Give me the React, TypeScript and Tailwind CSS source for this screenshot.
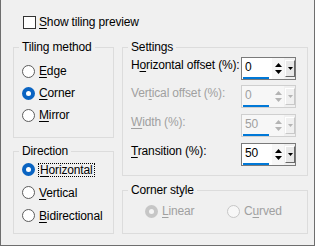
import type { ReactNode } from 'react';

const Acc = ({ c }: { c: string }) => (
  <span className="underline decoration-1 underline-offset-[2px]">{c}</span>
);

const Radio = ({ checked, disabled }: { checked?: boolean; disabled?: boolean }) => {
  if (checked && disabled) {
    return (
      <span className="w-[13px] h-[13px] shrink-0 rounded-full bg-[#c6c6c6] flex items-center justify-center">
        <span className="w-[5px] h-[5px] rounded-full bg-[#f4f4f4]" />
      </span>
    );
  }
  if (checked) {
    return (
      <span className="w-[13px] h-[13px] shrink-0 rounded-full bg-[#0a64c2] flex items-center justify-center">
        <span className="w-[5px] h-[5px] rounded-full bg-white" />
      </span>
    );
  }
  return (
    <span
      className={
        'w-[13px] h-[13px] shrink-0 rounded-full border ' +
        (disabled ? 'border-[#c6c6c6] bg-[#f7f7f7]' : 'border-[#5c5c5c] bg-white')
      }
    />
  );
};

const Group = ({ title, className, children }: { title: string; className: string; children: ReactNode }) => (
  <fieldset className={'border border-[#dcdcdc] box-border ' + className}>
    <legend className="ml-[5px] px-[3px] leading-[14px]">{title}</legend>
    {children}
  </fieldset>
);

const Spin = ({ value, disabled }: { value: string; disabled?: boolean }) => {
  const arrow = disabled ? '#b4b4b4' : '#000000';
  return (
    <div
      className={
        'flex shrink-0 w-[55px] h-[23px] border box-border ' +
        (disabled ? 'border-[#cfcfcf]' : 'border-[#7a7a7a]')
      }
    >
      <div className={'w-[30px] flex flex-col ' + (disabled ? 'bg-[#f7f7f7]' : 'bg-white')}>
        <span className={'pt-[2px] pl-[3px] leading-[14px] ' + (disabled ? 'text-[#a0a0a0]' : 'text-black')}>
          {value}
        </span>
        <span className="mt-[3px] ml-[1px] w-[26px] h-[2px] bg-[#0078d7]" />
      </div>
      <div className="w-[12px] flex flex-col items-center justify-center gap-[3px] bg-[#f7f7f7]">
        <svg width="7" height="4" viewBox="0 0 7 4">
          <path d="M0 4 L3.5 0 L7 4 Z" fill={arrow} />
        </svg>
        <svg width="7" height="4" viewBox="0 0 7 4">
          <path d="M0 0 L7 0 L3.5 4 Z" fill={arrow} />
        </svg>
      </div>
      <div className="flex-1 flex items-center pl-[1px]">
        <div
          className={
            'w-[10px] h-[17px] flex items-center justify-center border-t border-l border-white border-r border-b ' +
            (disabled ? 'border-r-[#c8c8c8] border-b-[#c8c8c8] bg-[#f0f0f0]' : 'border-r-[#696969] border-b-[#696969] bg-[#e8e8e8]')
          }
        >
          <svg width="5" height="3" viewBox="0 0 5 3">
            <path d="M0 0 L5 0 L2.5 3 Z" fill={arrow} />
          </svg>
        </div>
      </div>
    </div>
  );
};

const SettingRow = ({ label, value, disabled, className }: { label: ReactNode; value: string; disabled?: boolean; className: string }) => (
  <div className={'flex items-start h-[23px] ' + className}>
    <span
      className={
        'w-[110px] shrink-0 whitespace-nowrap pt-[1px] leading-[14px] ' + (disabled ? 'text-[#a0a0a0]' : 'text-black')
      }
    >
      {label}
    </span>
    <Spin value={value} disabled={disabled} />
  </div>
);

export default function App() {
  return (
    <div
      className="w-[315px] h-[246px] box-border bg-[#f0f0f0] border-l border-r border-b border-[#6e6e6e] text-[12px] leading-[14px] tracking-[-0.15px] text-black"
      style={{ fontFamily: '"Segoe UI", "Liberation Sans", Arial, sans-serif' }}
    >
      <div className="flex items-center gap-[3px] pt-[15px] pl-[22px] h-[29px] box-border">
        <span className="w-[13px] h-[13px] border border-[#333333] bg-white" />
        <span>
          <Acc c="S" />how tiling preview
        </span>
      </div>

      <div className="flex gap-[8px] mt-[11px] ml-[12px]">
        <div className="w-[101px] flex flex-col">
          <Group title="Tiling method" className="h-[98px]">
            <div className="flex flex-col pt-[6px] pl-[8px]">
              <div className="flex items-center gap-[4px] h-[22px]">
                <Radio />
                <span><Acc c="E" />dge</span>
              </div>
              <div className="flex items-center gap-[4px] h-[22px]">
                <Radio checked />
                <span><Acc c="C" />orner</span>
              </div>
              <div className="flex items-center gap-[4px] h-[22px]">
                <Radio />
                <span><Acc c="M" />irror</span>
              </div>
            </div>
          </Group>
          <Group title="Direction" className="h-[90px] mt-[6px]">
            <div className="flex flex-col pl-[8px]">
              <div className="flex items-center gap-[3px] h-[23px]">
                <Radio checked />
                <span className="border border-dotted border-black px-[1px] leading-[12px]">
                  <Acc c="H" />orizontal
                </span>
              </div>
              <div className="flex items-center gap-[4px] h-[23px]">
                <Radio />
                <span><Acc c="V" />ertical</span>
              </div>
              <div className="flex items-center gap-[4px] h-[23px]">
                <Radio />
                <span><Acc c="B" />idirectional</span>
              </div>
            </div>
          </Group>
        </div>

        <div className="w-[186px] flex flex-col">
          <Group title="Settings" className="h-[136px]">
            <div className="flex flex-col pt-[3px] pl-[8px]">
              <SettingRow label={<>H<Acc c="o" />rizontal offset (%):</>} value="0" className="" />
              <SettingRow label={<>Ver<Acc c="t" />ical offset (%):</>} value="0" disabled className="mt-[5px]" />
              <SettingRow label={<><Acc c="W" />idth (%):</>} value="50" disabled className="mt-[6px]" />
              <SettingRow label={<><Acc c="T" />ransition (%):</>} value="50" className="mt-[6px]" />
            </div>
          </Group>
          <Group title="Corner style" className="h-[51px] mt-[7px]">
            <div className="flex items-center h-[22px] mt-[3px] pl-[22px] text-[#a0a0a0]">
              <div className="w-[82px] flex items-center gap-[4px]">
                <Radio checked disabled />
                <span><Acc c="L" />inear</span>
              </div>
              <div className="flex items-center gap-[4px]">
                <Radio disabled />
                <span>C<Acc c="u" />rved</span>
              </div>
            </div>
          </Group>
        </div>
      </div>
    </div>
  );
}
